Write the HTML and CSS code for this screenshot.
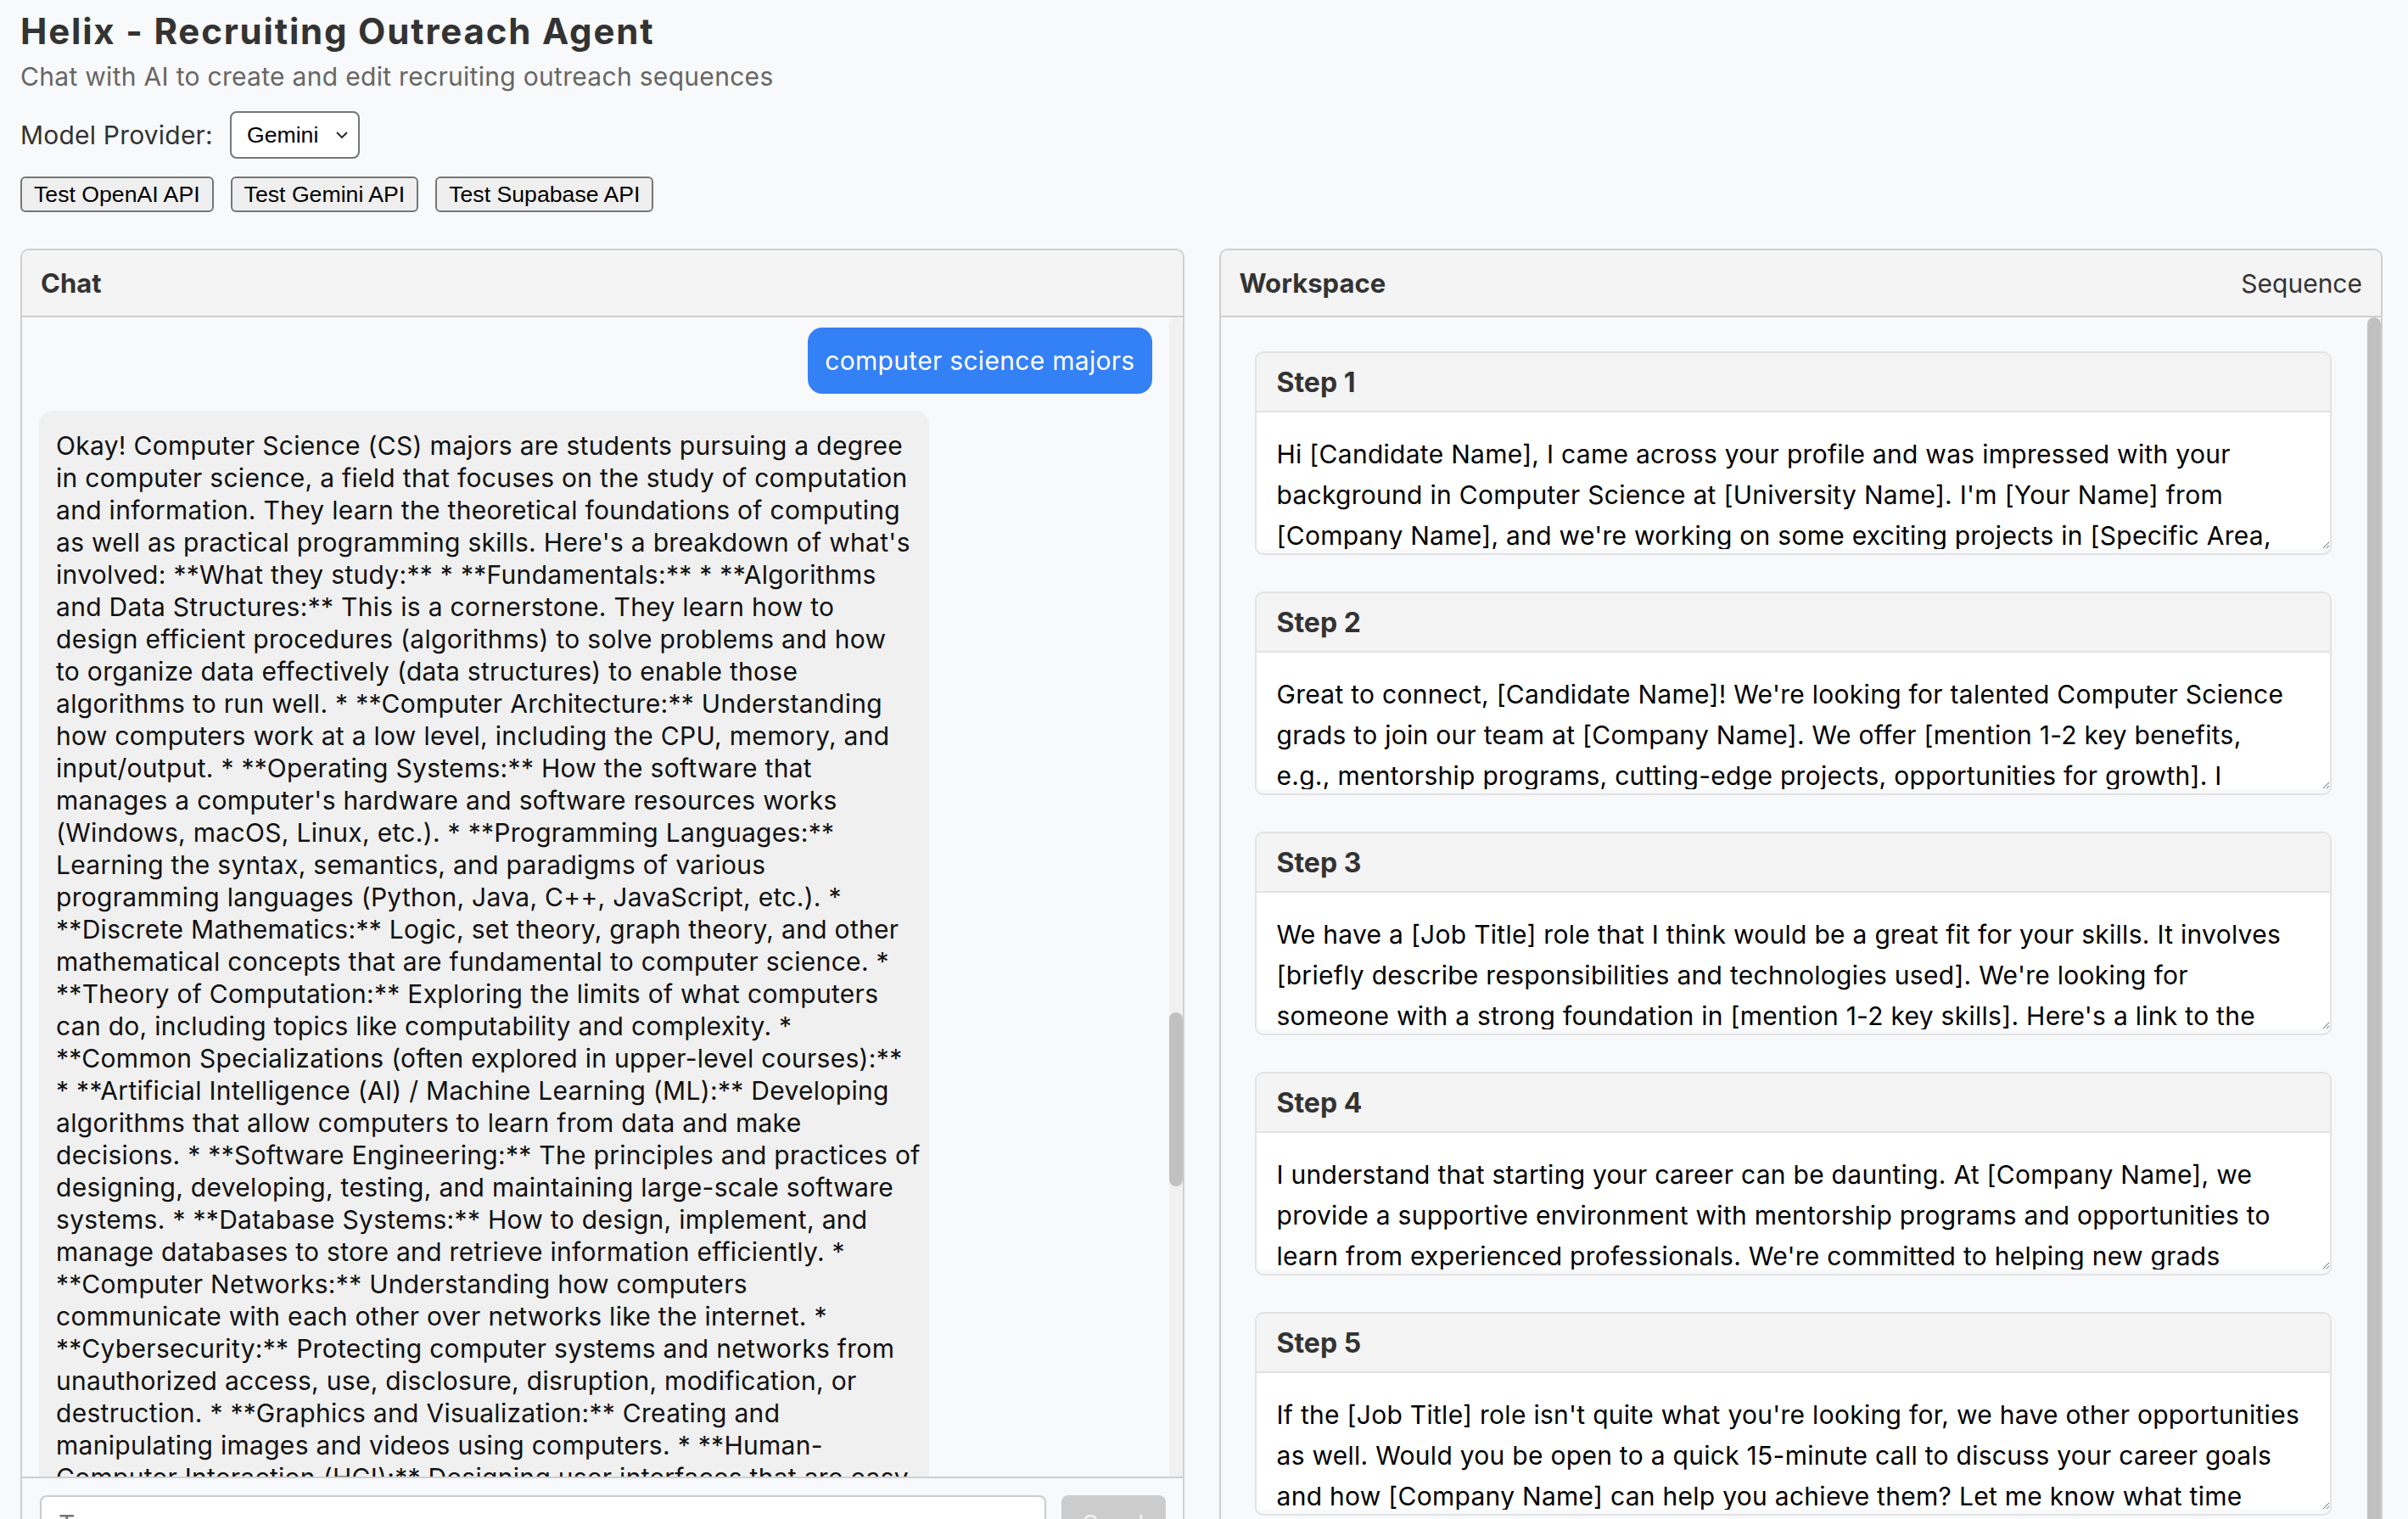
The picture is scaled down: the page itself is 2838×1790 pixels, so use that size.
FILE: index.html
```html
<!DOCTYPE html>
<html lang="en">
<head>
<meta charset="utf-8">
<title>Helix - Recruiting Outreach Agent</title>
<link rel="stylesheet" href="styles.css">
</head>
<body>
<div class="app">
  <header class="top">
    <h1 class="title">Helix - Recruiting Outreach Agent</h1>
    <p class="subtitle">Chat with AI to create and edit recruiting outreach sequences</p>
    <div class="provider">
      <label class="provider-label" for="provider">Model Provider:</label>
      <div class="select-wrap">
        <select id="provider" class="select">
          <option>Gemini</option>
          <option>OpenAI</option>
        </select>
        <svg class="chev" width="14" height="9" viewBox="0 0 14 9"><path d="M1.5 1.5 L7 7 L12.5 1.5" fill="none" stroke="#222" stroke-width="1.8" stroke-linecap="round" stroke-linejoin="round"/></svg>
      </div>
    </div>
    <div class="tests">
      <button class="btn">Test OpenAI API</button>
      <button class="btn">Test Gemini API</button>
      <button class="btn">Test Supabase API</button>
    </div>
  </header>

  <main class="panels">
    <section class="panel chat">
      <div class="panel-head"><h2 class="panel-title">Chat</h2></div>
      <div class="chat-body">
        <div class="messages">
          <div class="msg user">computer science majors</div>
          <div class="msg ai">Okay! Computer Science (CS) majors are students pursuing a degree<br>
in computer science, a field that focuses on the study of computation<br>
and information. They learn the theoretical foundations of computing<br>
as well as practical programming skills. Here's a breakdown of what's<br>
involved: **What they study:** * **Fundamentals:** * **Algorithms<br>
and Data Structures:** This is a cornerstone. They learn how to<br>
design efficient procedures (algorithms) to solve problems and how<br>
to organize data effectively (data structures) to enable those<br>
algorithms to run well. * **Computer Architecture:** Understanding<br>
how computers work at a low level, including the CPU, memory, and<br>
input/output. * **Operating Systems:** How the software that<br>
manages a computer's hardware and software resources works<br>
(Windows, macOS, Linux, etc.). * **Programming Languages:**<br>
Learning the syntax, semantics, and paradigms of various<br>
programming languages (Python, Java, C++, JavaScript, etc.). *<br>
**Discrete Mathematics:** Logic, set theory, graph theory, and other<br>
mathematical concepts that are fundamental to computer science. *<br>
**Theory of Computation:** Exploring the limits of what computers<br>
can do, including topics like computability and complexity. *<br>
**Common Specializations (often explored in upper-level courses):**<br>
* **Artificial Intelligence (AI) / Machine Learning (ML):** Developing<br>
algorithms that allow computers to learn from data and make<br>
decisions. * **Software Engineering:** The principles and practices of<br>
designing, developing, testing, and maintaining large-scale software<br>
systems. * **Database Systems:** How to design, implement, and<br>
manage databases to store and retrieve information efficiently. *<br>
**Computer Networks:** Understanding how computers<br>
communicate with each other over networks like the internet. *<br>
**Cybersecurity:** Protecting computer systems and networks from<br>
unauthorized access, use, disclosure, disruption, modification, or<br>
destruction. * **Graphics and Visualization:** Creating and<br>
manipulating images and videos using computers. * **Human-<br>
Computer Interaction (HCI):** Designing user interfaces that are easy<br>
to use and effective. * **Data Science:** Extracting knowledge and<br>
insights from large datasets.</div>
        </div>
        <div class="vscroll chat-scroll"><div class="vthumb"></div></div>
      </div>
      <div class="chat-input">
        <textarea class="input" placeholder="Type your message..."></textarea>
        <button class="send" disabled>Send</button>
      </div>
    </section>

    <section class="panel workspace">
      <div class="panel-head">
        <h2 class="panel-title">Workspace</h2>
        <span class="panel-tab">Sequence</span>
      </div>
      <div class="ws-body">
        <div class="steps">
          <div class="step">
            <h3 class="step-title">Step 1</h3>
            <textarea class="step-text">Hi [Candidate Name], I came across your profile and was impressed with your
background in Computer Science at [University Name]. I'm [Your Name] from
[Company Name], and we're working on some exciting projects in [Specific Area,
e.g., AI, web development]. I'd love to tell you more about what we do.</textarea>
          </div>
          <div class="step">
            <h3 class="step-title">Step 2</h3>
            <textarea class="step-text">Great to connect, [Candidate Name]! We're looking for talented Computer Science
grads to join our team at [Company Name]. We offer [mention 1-2 key benefits,
e.g., mentorship programs, cutting-edge projects, opportunities for growth]. I
think your skills would be a great fit for our team.</textarea>
          </div>
          <div class="step">
            <h3 class="step-title">Step 3</h3>
            <textarea class="step-text">We have a [Job Title] role that I think would be a great fit for your skills. It involves
[briefly describe responsibilities and technologies used]. We're looking for
someone with a strong foundation in [mention 1-2 key skills]. Here's a link to the
job description: [Link].</textarea>
          </div>
          <div class="step">
            <h3 class="step-title">Step 4</h3>
            <textarea class="step-text">I understand that starting your career can be daunting. At [Company Name], we
provide a supportive environment with mentorship programs and opportunities to
learn from experienced professionals. We're committed to helping new grads
grow and succeed in their careers.</textarea>
          </div>
          <div class="step">
            <h3 class="step-title">Step 5</h3>
            <textarea class="step-text">If the [Job Title] role isn't quite what you're looking for, we have other opportunities
as well. Would you be open to a quick 15-minute call to discuss your career goals
and how [Company Name] can help you achieve them? Let me know what time
works best for you.</textarea>
          </div>
        </div>
        <div class="vscroll ws-scroll"><div class="vthumb"></div></div>
      </div>
    </section>
  </main>
</div>
</body>
</html>
```

FILE: styles.css
```css
* { box-sizing: border-box; }

html, body {
  margin: 0;
  height: 100%;
  overflow: hidden;
}

body {
  background: #f8f9fa;
  font-family: Inter, "Noto Sans", sans-serif;
  color: #333;
}

.app {
  padding: 13px 30px 0 24px;
}

.title {
  margin: 0;
  font-size: 42px;
  line-height: 48px;
  font-weight: 700;
  letter-spacing: 1.8px;
  color: #333;
}

.subtitle {
  margin: 11px 0 0;
  font-size: 30px;
  line-height: 36px;
  letter-spacing: 0.3px;
  color: #666;
}

.provider {
  display: flex;
  align-items: center;
  gap: 20px;
  margin-top: 23px;
}

.provider-label {
  font-size: 30px;
  line-height: 36px;
  letter-spacing: 0.2px;
  color: #333;
}

.select-wrap {
  position: relative;
  width: 153px;
  height: 56px;
}

.select {
  appearance: none;
  -webkit-appearance: none;
  width: 100%;
  height: 100%;
  border: 2px solid #767676;
  border-radius: 8px;
  background: #fff;
  font-family: "Liberation Sans", Arial, sans-serif;
  font-size: 26.67px;
  color: #000;
  padding: 0 0 0 18px;
}

.chev {
  position: absolute;
  right: 14px;
  top: 24px;
  pointer-events: none;
}

.tests {
  display: flex;
  gap: 20px;
  margin-top: 21px;
}

.btn {
  height: 42px;
  padding: 0 14px;
  border: 2px solid #767676;
  border-radius: 6px;
  background: #efefef;
  font-family: "Liberation Sans", Arial, sans-serif;
  font-size: 26.67px;
  color: #000;
}

.panels {
  display: flex;
  gap: 41px;
  margin-top: 43px;
}

.panel {
  flex: 1 1 0;
  height: 1560px;
  border: 2px solid #cfcfcf;
  border-radius: 10px;
  display: flex;
  flex-direction: column;
  overflow: hidden;
}

.panel-head {
  display: flex;
  justify-content: space-between;
  align-items: center;
  height: 79px;
  padding: 0 22px;
  background: #f4f4f4;
  border-bottom: 2px solid #cfcfcf;
  flex: none;
}

.panel-title {
  margin: 0;
  font-size: 31px;
  line-height: 36px;
  font-weight: 700;
  color: #333;
}

.panel-tab {
  font-size: 30px;
  line-height: 36px;
  color: #333;
}

.chat-body {
  display: flex;
  height: 1366px;
  flex: none;
}

.messages {
  flex: 1;
  overflow: hidden;
  padding: 12px 20px 0;
  display: flex;
  flex-direction: column;
  gap: 20px;
}

.msg {
  font-size: 30px;
  line-height: 38px;
  letter-spacing: 0.3px;
  padding: 20px;
  border-radius: 17px;
  max-width: 80%;
}

.msg.user {
  align-self: flex-end;
  background: #3480f5;
  color: #fff;
}

.msg.ai {
  align-self: flex-start;
  width: 80%;
  flex: none;
  background: #f0f0f0;
  color: #111;
  padding: 22px 20px;
  white-space: nowrap;
}

.vscroll {
  flex: none;
  width: 16px;
  background: #f1f1f1;
  border-radius: 8px 8px 0 0;
}

.vthumb {
  background: #c1c1c1;
  border-radius: 8px;
}

.chat-scroll .vthumb {
  margin-top: 819px;
  height: 205px;
}

.chat-input {
  display: flex;
  gap: 18px;
  padding: 20px 20px 20px 21px;
  border-top: 2px solid #cfcfcf;
  flex: none;
}

.input {
  flex: 1;
  height: 68px;
  border: 2px solid #cccccc;
  border-radius: 8px;
  padding: 13px 20px;
  font-family: Inter, "Noto Sans", sans-serif;
  font-size: 30px;
  line-height: 38px;
  background: #fff;
  resize: none;
}

.input::placeholder { color: #757575; }

.send {
  width: 123px;
  height: 68px;
  border: none;
  border-radius: 8px;
  background: #cccccc;
  color: #f2f2f2;
  font-family: Inter, "Noto Sans", sans-serif;
  font-size: 30px;
}

.ws-body {
  display: flex;
  flex: 1;
  min-height: 0;
}

.steps {
  flex: 1;
  padding: 40px 42px 0 40px;
  display: flex;
  flex-direction: column;
  gap: 43px;
  overflow: hidden;
}

.ws-scroll {
  background: #c1c1c1;
  border-radius: 8px;
}

.step {
  flex: none;
  border: 2px solid #e2e2e2;
  border-radius: 10px;
  overflow: hidden;
}

.step-title {
  margin: 0;
  height: 70px;
  padding: 16px 24px 0;
  background: #f4f4f4;
  border-bottom: 2px solid #e2e2e2;
  font-size: 32px;
  line-height: 38px;
  font-weight: 700;
  color: #333;
}

.step-text {
  display: block;
  width: 100%;
  height: 161px;
  margin: 0 0 5px;
  border: none;
  padding: 25px 12px 24px 24px;
  background: #fff;
  font-family: Inter, "Noto Sans", sans-serif;
  font-size: 30px;
  line-height: 48px;
  letter-spacing: 0.28px;
  color: #000;
  outline: none;
  white-space: pre-wrap;
}

.step-text::-webkit-scrollbar { width: 14px; }
.step-text::-webkit-scrollbar-track { background: #f1f1f1; }
.step-text::-webkit-scrollbar-thumb { background: #c1c1c1; border-radius: 7px; }
```
